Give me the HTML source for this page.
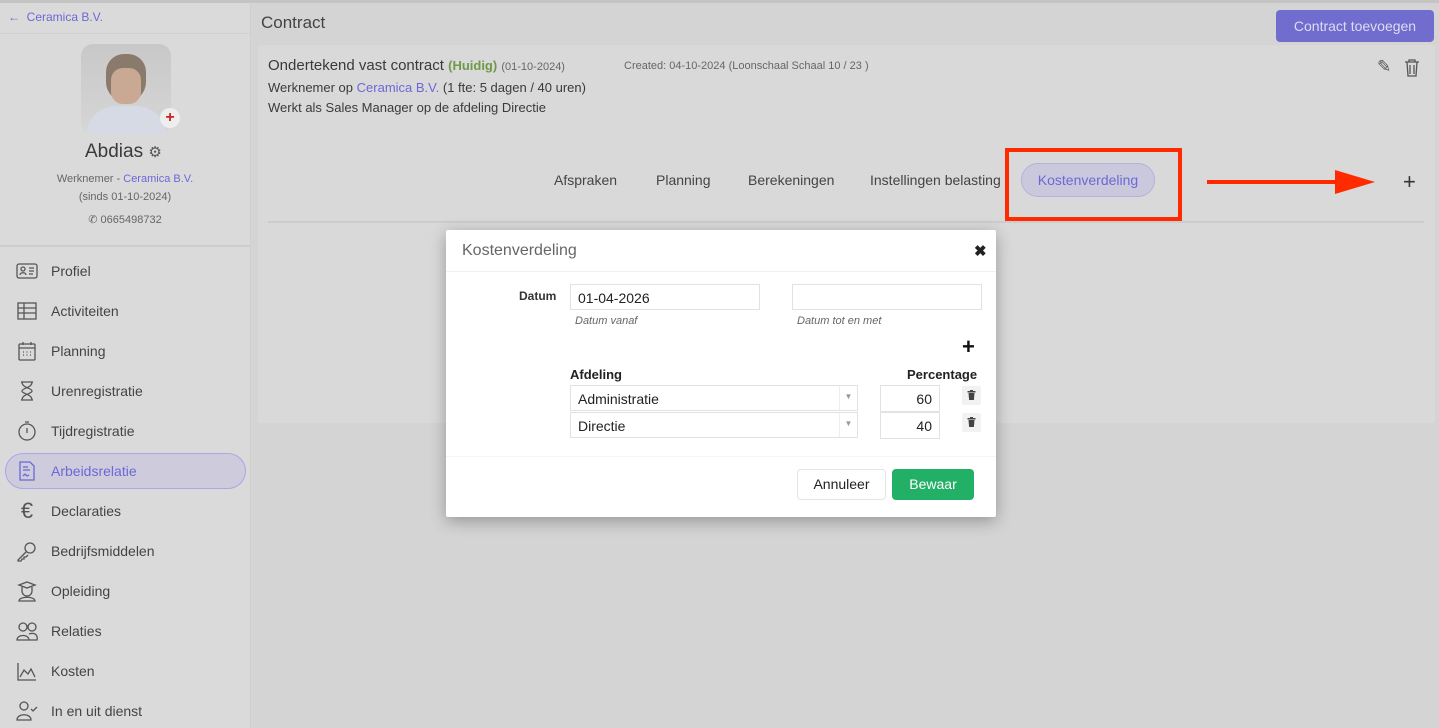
<!DOCTYPE html>
<html><head><meta charset="utf-8"><style>
*{box-sizing:border-box;margin:0;padding:0}
body{width:1439px;height:728px;overflow:hidden;font-family:"Liberation Sans",sans-serif;background:#d4d4d4;position:relative;color:#3a3a3a}
.a{position:absolute}
.side{left:0;top:3px;width:251px;height:725px;background:#dadada;border-right:1px solid #cfcfcf}
.topline{left:0;top:0;width:1439px;height:3px;background:#c4c4c4}
.nav{left:16px;font-size:14px;color:#444;display:flex;align-items:center}
.nav svg{width:22px;height:22px;margin-right:13px}
.link{color:#6c68d6}
.card{left:258px;top:45px;width:1177px;height:378px;background:#d9d9d9;border-radius:3px}
.tab{top:167px;height:28px;line-height:26px;font-size:14px;color:#444}
.modal{left:446px;top:230px;width:550px;height:287px;background:#fff;box-shadow:0 4px 16px rgba(0,0,0,.3);border-radius:2px}
.inp{border:1px solid #e2e2e2;background:#fff;font-size:14px;color:#222}
.tr{width:19px;height:19px;background:#f2f2f2;border-radius:2px}
</style></head><body>
<div class="a topline"></div>
<div class="a side"></div>
<div class="a" style="left:8px;top:10px;font-size:12px;color:#6c68d6">&#8592;&nbsp; Ceramica B.V.</div>
<div class="a" style="left:0;top:33px;width:250px;height:1px;background:#d0d0d0"></div>
<div class="a" style="left:81px;top:44px;width:90px;height:90px;border-radius:12px;background:linear-gradient(#c8c8c8,#d6d6d6);overflow:hidden">
<div class="a" style="left:25px;top:10px;width:40px;height:48px;border-radius:18px 18px 20px 20px;background:#8a7a6c"></div>
<div class="a" style="left:30px;top:24px;width:30px;height:36px;border-radius:12px;background:#c9a994"></div>
<div class="a" style="left:5px;top:62px;width:80px;height:40px;border-radius:30px 30px 0 0;background:#d5dae4"></div></div>
<div class="a" style="left:160px;top:108px;width:20px;height:20px;border-radius:50%;background:#eee;color:#c22;font-weight:bold;text-align:center;line-height:20px;font-size:16px">+</div>
<div class="a" style="left:85px;top:141px;font-size:19px;color:#3a3a3a">Abdias <span style="font-size:15px;color:#555">⚙</span></div>
<div class="a" style="left:0;width:250px;text-align:center;top:173px;font-size:11px;color:#666">Werknemer - <span class="link">Ceramica B.V.</span></div>
<div class="a" style="left:0;width:250px;text-align:center;top:191px;font-size:11px;color:#666">(sinds 01-10-2024)</div>
<div class="a" style="left:0;width:250px;text-align:center;top:213px;font-size:11px;color:#666">✆ 0665498732</div>
<div class="a" style="left:0;top:245px;width:250px;height:2px;background:#cdcdcd"></div>
<div class="a" style="left:5px;top:453px;width:241px;height:36px;border-radius:18px;background:#cdcbdc;border:1px solid #aaa6e8"></div>
<div class="a nav" style="top:260px"><svg viewBox="0 0 22 22" fill="none" stroke="#555" stroke-width="1.3"><rect x="1" y="4" width="20" height="14" rx="2"/><circle cx="7" cy="9" r="2"/><path d="M4 15c0-3 6-3 6 0M13 8h5M13 11h5M13 14h4"/></svg>Profiel</div>
<div class="a nav" style="top:300px"><svg viewBox="0 0 22 22" fill="none" stroke="#555" stroke-width="1.3"><rect x="2" y="3" width="18" height="16"/><path d="M2 8h18M2 13h18M8 3v16"/></svg>Activiteiten</div>
<div class="a nav" style="top:340px"><svg viewBox="0 0 22 22" fill="none" stroke="#555" stroke-width="1.3"><rect x="3" y="4" width="16" height="16" rx="1"/><path d="M3 8h16M7 2v3M15 2v3M7 12h1M10.5 12h1M14 12h1M7 15h1M10.5 15h1M14 15h1"/></svg>Planning</div>
<div class="a nav" style="top:380px"><svg viewBox="0 0 22 22" fill="none" stroke="#555" stroke-width="1.3"><path d="M5 2h12M5 20h12M6 2c0 6 10 6 10 9s-10 3-10 9M16 2c0 6-10 6-10 9s10 3 10 9"/></svg>Urenregistratie</div>
<div class="a nav" style="top:420px"><svg viewBox="0 0 22 22" fill="none" stroke="#555" stroke-width="1.3"><circle cx="11" cy="12" r="8"/><path d="M9 2h4M11 8v5"/></svg>Tijdregistratie</div>
<div class="a nav" style="top:460px;color:#6c68d6"><svg viewBox="0 0 22 22" fill="none" stroke="#6c68d6" stroke-width="1.3"><path d="M4 2h10l4 4v14H4z"/><path d="M7 7h5M7 10h7M7 16l2-2 2 2 2-1"/></svg>Arbeidsrelatie</div>
<div class="a nav" style="top:500px"><span style="width:22px;margin-right:13px;font-size:22px;text-align:center;color:#555;line-height:22px">€</span>Declaraties</div>
<div class="a nav" style="top:540px"><svg viewBox="0 0 22 22" fill="none" stroke="#555" stroke-width="1.3"><circle cx="14" cy="8" r="5"/><path d="M10 12l-8 8v1h3l1-2h2v-2h2l2-2"/></svg>Bedrijfsmiddelen</div>
<div class="a nav" style="top:580px"><svg viewBox="0 0 22 22" fill="none" stroke="#555" stroke-width="1.3"><path d="M3 5l8-3 8 3-8 3zM6 7v4a5 5 0 0 0 10 0V7M3 21c0-5 16-5 16 0z"/></svg>Opleiding</div>
<div class="a nav" style="top:620px"><svg viewBox="0 0 22 22" fill="none" stroke="#555" stroke-width="1.3"><circle cx="7" cy="7" r="4"/><circle cx="16" cy="7" r="4"/><path d="M1 20c0-6 12-6 12 0zM13 14c6-2 9 1 8 6h-8"/></svg>Relaties</div>
<div class="a nav" style="top:660px"><svg viewBox="0 0 22 22" fill="none" stroke="#555" stroke-width="1.3"><path d="M2 3v17h18M4 17l4-7 4 4 3-5 4 8"/></svg>Kosten</div>
<div class="a nav" style="top:700px"><svg viewBox="0 0 22 22" fill="none" stroke="#555" stroke-width="1.3"><circle cx="8" cy="6" r="4"/><path d="M1 20c0-7 14-7 14 0zM15 9l2 2 4-4"/></svg>In en uit dienst</div>

<div class="a" style="left:261px;top:13px;font-size:17px;color:#444">Contract</div>
<div class="a" style="left:1276px;top:10px;width:158px;height:32px;border-radius:4px;background:#716dcf;color:#dcdcf0;font-size:14px;text-align:center;line-height:32px">Contract toevoegen</div>
<div class="a card"></div>
<div class="a" style="left:268px;top:57px;font-size:15px;color:#3a3a3a">Ondertekend vast contract <b style="color:#6e9a4a;font-size:13px">(Huidig)</b> <span style="font-size:11px;color:#666">(01-10-2024)</span></div>
<div class="a" style="left:624px;top:60px;font-size:11px;color:#666">Created: 04-10-2024 (Loonschaal Schaal 10 / 23 )</div>
<div class="a" style="left:268px;top:80px;font-size:13px;color:#3a3a3a">Werknemer op <span class="link">Ceramica B.V.</span> (1 fte: 5 dagen / 40 uren)</div>
<div class="a" style="left:268px;top:100px;font-size:13px;color:#3a3a3a">Werkt als Sales Manager op de afdeling Directie</div>
<div class="a" style="left:1377px;top:57px;font-size:17px;color:#555">✎</div>
<svg class="a" style="left:1404px;top:59px" width="16" height="18" viewBox="0 0 16 18" fill="none" stroke="#555" stroke-width="1.3"><path d="M1 3h14M5 3V1h6v2M3 3l1 14h8l1-14M6 6v9M10 6v9"/></svg>
<div class="a tab" style="left:554px">Afspraken</div>
<div class="a tab" style="left:656px">Planning</div>
<div class="a tab" style="left:748px">Berekeningen</div>
<div class="a tab" style="left:870px">Instellingen belasting</div>
<div class="a tab" style="left:1021px;top:163px;width:134px;height:34px;line-height:32px;border-radius:17px;background:#cac8dc;border:1px solid #b4b1e0;color:#6c68d6;text-align:center">Kostenverdeling</div>
<div class="a" style="left:1005px;top:148px;width:177px;height:73px;border:4px solid #ff2a00"></div>
<div class="a" style="left:1207px;top:180px;width:140px;height:4px;background:#ff2a00"></div>
<div class="a" style="left:1335px;top:170px;width:0;height:0;border-left:40px solid #ff2a00;border-top:12px solid transparent;border-bottom:12px solid transparent"></div>
<div class="a" style="left:1403px;top:169px;font-size:22px;color:#333">+</div>
<div class="a" style="left:268px;top:221px;width:1156px;height:2px;background:#cccccc"></div>

<div class="a modal">
<div class="a" style="left:16px;top:12px;font-size:16px;color:#666">Kostenverdeling</div>
<div class="a" style="left:528px;top:12px;font-size:15px;font-weight:bold;color:#222">✖</div>
<div class="a" style="left:0;top:41px;width:550px;height:1px;background:#f2f2f2"></div>
<div class="a" style="left:73px;top:59px;font-size:12px;font-weight:bold;color:#333">Datum</div>
<div class="a inp" style="left:124px;top:54px;width:190px;height:26px;padding:5px 7px">01-04-2026</div>
<div class="a inp" style="left:346px;top:54px;width:190px;height:26px"></div>
<div class="a" style="left:129px;top:85px;font-size:11px;font-style:italic;color:#666">Datum vanaf</div>
<div class="a" style="left:351px;top:85px;font-size:11px;font-style:italic;color:#666">Datum tot en met</div>
<div class="a" style="left:516px;top:104px;font-size:22px;font-weight:bold;color:#111">+</div>
<div class="a" style="left:124px;top:137px;font-size:13px;font-weight:bold;color:#222">Afdeling</div>
<div class="a" style="left:461px;top:137px;font-size:13px;font-weight:bold;color:#222">Percentage</div>
<div class="a inp" style="left:124px;top:155px;width:288px;height:26px;padding:5px 7px">Administratie<span class="a" style="right:0;top:0;width:18px;height:24px;border-left:1px solid #eee;font-size:8px;color:#999;text-align:center;line-height:22px">▼</span></div>
<div class="a inp" style="left:124px;top:182px;width:288px;height:26px;padding:5px 7px">Directie<span class="a" style="right:0;top:0;width:18px;height:24px;border-left:1px solid #eee;font-size:8px;color:#999;text-align:center;line-height:22px">▼</span></div>
<div class="a inp" style="left:434px;top:155px;width:60px;height:27px;padding:5px 7px;text-align:right">60</div>
<div class="a inp" style="left:434px;top:182px;width:60px;height:27px;padding:5px 7px;text-align:right">40</div>
<div class="a tr" style="left:516px;top:156px"><svg width="19" height="19" viewBox="0 0 19 19" fill="#444"><rect x="5.5" y="5" width="8" height="1.5"/><rect x="8" y="4" width="3" height="1.2"/><path d="M6.5 7h6l-.6 7h-4.8z"/></svg></div>
<div class="a tr" style="left:516px;top:183px"><svg width="19" height="19" viewBox="0 0 19 19" fill="#444"><rect x="5.5" y="5" width="8" height="1.5"/><rect x="8" y="4" width="3" height="1.2"/><path d="M6.5 7h6l-.6 7h-4.8z"/></svg></div>
<div class="a" style="left:0;top:226px;width:550px;height:1px;background:#f4f4f4"></div>
<div class="a" style="left:351px;top:239px;width:89px;height:31px;border:1px solid #e4e4e4;border-radius:4px;text-align:center;line-height:29px;font-size:14px;color:#222">Annuleer</div>
<div class="a" style="left:446px;top:239px;width:82px;height:31px;background:#22b066;border-radius:4px;text-align:center;line-height:31px;font-size:14px;color:#fff">Bewaar</div>
</div>
</body></html>
